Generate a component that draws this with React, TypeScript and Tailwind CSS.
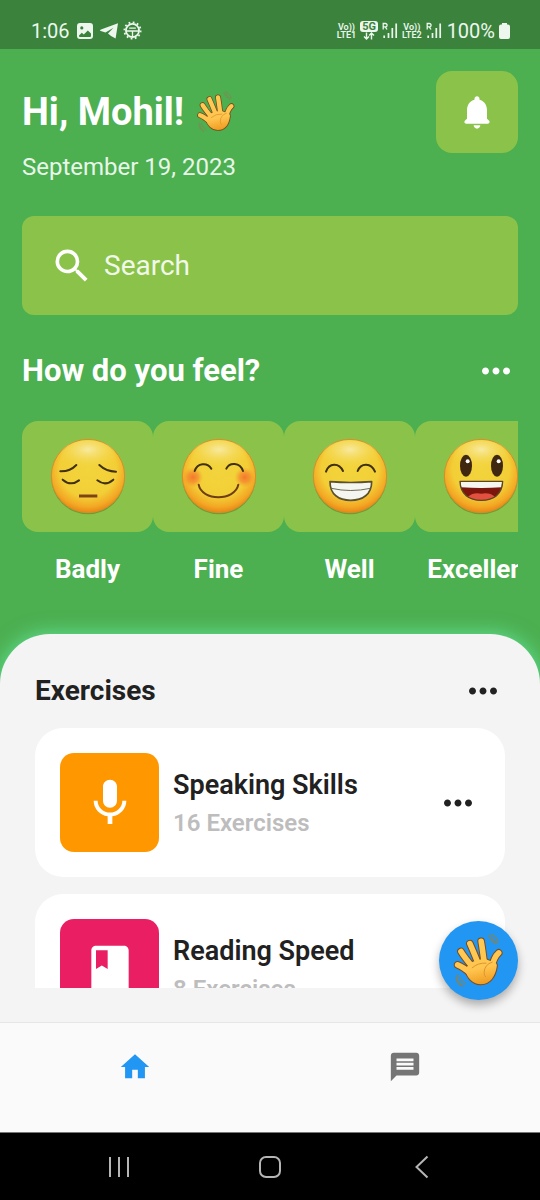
import type { ReactNode } from "react";
import { MdBook, MdHome, MdMessage, MdMic, MdMoreHoriz, MdSearch } from "react-icons/md";

function WavingHand({ className }: { className: string }) {
  const fingers = [
    "M80 162 Q97 168 118 188",
    "M90 122 Q101 140 126 170",
    "M117 98 Q126 118 142 158",
    "M151 91 Q155 114 160 154",
    "M204 126 Q190 138 182 172",
  ];
  const palm = "M112 176 C116 198 132 212 150 212 C172 212 186 194 190 164 L160 152 L130 160 Z";
  return (
    <svg viewBox="66 66 154 166" className={className} role="img" aria-label="Waving hand">
      <defs>
        <linearGradient id="hand" gradientUnits="userSpaceOnUse" x1="120" y1="80" x2="150" y2="225">
          <stop offset="0" stopColor="#ffcb55" />
          <stop offset="0.65" stopColor="#ffc54f" />
          <stop offset="1" stopColor="#ee981d" />
        </linearGradient>
      </defs>
      <g fill="none" stroke="#8a8354" strokeWidth="3.5" strokeLinecap="round" opacity="0.8">
        <path d="M174 72 Q178 90 196 98 M181 70 Q196 74 203 93 M182 77 Q186 88 199 95" />
        <path d="M77 192 Q77 212 97 227 M75 200 Q78 219 91 225 M84 195 Q90 209 103 220" />
      </g>
      <g stroke="#7b4a1c" fill="none" strokeLinecap="round" strokeWidth="23">
        {fingers.map((d) => <path key={d} d={d} />)}
        <path d={palm} fill="#7b4a1c" strokeLinejoin="round" />
      </g>
      <g stroke="url(#hand)" fill="none" strokeLinecap="round" strokeWidth="17">
        {fingers.map((d) => <path key={d} d={d} />)}
        <path d={palm} fill="url(#hand)" strokeLinejoin="round" />
      </g>
      <path d="M124 171 Q142 155 166 157 M184 154 Q160 162 160 186 Q160 194 164 198" fill="none" stroke="#dd9430" strokeWidth="3" strokeLinecap="round" />
    </svg>
  );
}

function Face({ name, children }: { name: string; children: ReactNode }) {
  return (
    <svg viewBox="0 0 240 240" className="size-20" role="img" aria-label={name}>
      <defs>
        <radialGradient id="skin" cx="0.5" cy="0.4" r="0.62">
          <stop offset="0" stopColor="#f2d43c" />
          <stop offset="0.62" stopColor="#f3cf37" />
          <stop offset="0.84" stopColor="#f3a824" />
          <stop offset="1" stopColor="#e87c12" />
        </radialGradient>
        <radialGradient id="shine" cx="0.5" cy="0.3" r="0.6">
          <stop offset="0" stopColor="#f8edae" stopOpacity="0.9" />
          <stop offset="1" stopColor="#f4d848" stopOpacity="0" />
        </radialGradient>
        <radialGradient id="cheek">
          <stop offset="0" stopColor="#f5672c" stopOpacity="0.85" />
          <stop offset="0.5" stopColor="#f5782c" stopOpacity="0.6" />
          <stop offset="1" stopColor="#f5982c" stopOpacity="0" />
        </radialGradient>
      </defs>
      <circle cx="120" cy="122" r="110" fill="#4e6b1d" opacity="0.45" />
      <circle cx="120" cy="117" r="110" fill="url(#skin)" stroke="#d3902a" strokeWidth="3" />
      <ellipse cx="120" cy="56" rx="84" ry="46" fill="url(#shine)" />
      {children}
    </svg>
  );
}

const line = { fill: "none", stroke: "#40300f", strokeWidth: 6, strokeLinecap: "round" as const };

const moods = [
  {
    name: "Badly",
    face: (
      <>
        <path {...line} d="M37 103 Q66 104 85 84 M154 84 Q174 103 204 104 M44 128 Q68 149 93 130 M148 130 Q172 149 196 128" />
        <path d="M93 177 H148" stroke="#7e4415" strokeWidth="9" />
      </>
    ),
  },
  {
    name: "Fine",
    face: (
      <>
        <circle cx="42" cy="121" r="31" fill="url(#cheek)" />
        <circle cx="197" cy="121" r="31" fill="url(#cheek)" />
        <path {...line} d="M47 102 C55 77 85 75 97 95 M142 95 C152 75 183 76 192 102" />
        <path {...line} stroke="#6f3d12" d="M59 143 C68 193 168 193 178 143" />
      </>
    ),
  },
  {
    name: "Well",
    face: (
      <>
        <path {...line} d="M48 104 C57 77 87 76 99 102 M143 102 C153 76 184 77 195 104" />
        <path d="M60 134 Q122 139 185 134 C185 172 158 190 122 190 C86 190 60 172 60 134Z" fill="#f5f6f0" stroke="#5b5030" strokeWidth="5" strokeLinejoin="round" />
        <path d="M64 154 Q122 167 181 154" fill="none" stroke="#6f6b58" strokeWidth="3" />
      </>
    ),
  },
  {
    name: "Excellent",
    face: (
      <>
        <ellipse cx="75" cy="86" rx="18" ry="33" fill="#40270f" />
        <ellipse cx="168" cy="86" rx="18" ry="33" fill="#40270f" />
        <circle cx="80" cy="73" r="6" fill="#fff" />
        <circle cx="173" cy="73" r="6" fill="#fff" />
        <path d="M57 133 H185 C184 172 158 190 121 190 C84 190 58 172 57 133Z" fill="#7c160d" />
        <path d="M81 179 Q97 165 121 170 Q145 165 162 179 Q145 190 121 190 Q98 190 81 179Z" fill="#e2503f" />
        <path d="M58 133 H184 L181 151 Q121 155 61 151Z" fill="#f5f6f0" />
        <path d="M57 133 H185 C184 172 158 190 121 190 C84 190 58 172 57 133Z" fill="none" stroke="#5b4526" strokeWidth="4" strokeLinejoin="round" />
      </>
    ),
  },
];

const exercises = [
  { title: "Speaking Skills", count: 16, Icon: MdMic, tile: "bg-[#ff9800]" },
  { title: "Reading Speed", count: 8, Icon: MdBook, tile: "bg-[#e91e63]" },
];

function Signal() {
  return (
    <svg viewBox="0 0 16 17" className="h-[17px] w-4" aria-hidden="true">
      <path d="M1.2 7.5V1.5H3.4a1.7 1.7 0 0 1 0 3.4H1.2M3.3 4.9L5 7.5" fill="none" stroke="#edf7ed" strokeWidth="1.3" />
      <path d="M2.200 13.500V16M6.500 11V16M10.300 6V16M14.200 1.500V16" stroke="#edf7ed" strokeWidth="1.7" />
    </svg>
  );
}

function VoLte({ sim }: { sim: number }) {
  return (
    <span className="flex flex-col items-center text-[9px] leading-[8px] font-semibold">
      <span>Vo))</span>
      <span>LTE{sim}</span>
    </span>
  );
}

function StatusBar() {
  return (
    <div className="flex h-[49px] shrink-0 items-center justify-between bg-[#3b833d] pt-3 pr-[30px] pl-[31px] text-[#edf7ed]">
      <div className="flex items-center gap-[7px]">
        <span className="text-xl leading-6">1:06</span>
        <svg viewBox="0 0 16 16" className="size-4" aria-hidden="true">
          <path fillRule="evenodd" fill="#edf7ed" d="M3 0H13A3 3 0 0 1 16 3V13A3 3 0 0 1 13 16H3A3 3 0 0 1 0 13V3A3 3 0 0 1 3 0ZM2 12.5V13.2Q2 14 3 14H13Q14 14 14 13V10.5L10.8 7.5L6.8 11.5L4.8 9.8ZM4.8 3.3A1.6 1.6 0 1 0 4.8 6.5A1.6 1.6 0 1 0 4.8 3.3Z" />
        </svg>
        <svg viewBox="0 0 18 16" className="h-4 w-[18px]" aria-hidden="true">
          <path d="M18 .3 15.6 15.6Q10.5 13 8 10.4L13.500 4.800 5.500 9.400 0 7.700Q0 7 1 6.600Z" fill="#edf7ed" />
        </svg>
        <svg viewBox="0 0 20 20" className="-ml-0.5 size-[19px]" aria-hidden="true">
          <circle cx="10" cy="10" r="8.6" fill="none" stroke="#edf7ed" strokeWidth="1.8" strokeDasharray="1.9 2.6" />
          <circle cx="10" cy="10" r="6.9" fill="none" stroke="#edf7ed" strokeWidth="1.9" />
          <path d="M3 10.500H17M10 10V17M6.500 7.500H13.500" fill="none" stroke="#edf7ed" strokeWidth="1.4" />
        </svg>
      </div>
      <div className="flex items-center gap-1">
        <VoLte sim={1} />
        <span className="flex flex-col items-center">
          <span className="rounded-[3px] bg-[#edf7ed] px-0.5 text-[11px] leading-[11px] font-bold text-[#3b833d]">5G</span>
          <svg viewBox="0 0 12 8" className="h-2 w-3" aria-hidden="true">
            <path d="M3.5 .5V7M1 4.5 3.5 7 6 4.5M8.5 7.5V1M6.2 3.5 8.5 1 11 3.5" fill="none" stroke="#edf7ed" strokeWidth="1.4" />
          </svg>
        </span>
        <Signal />
        <VoLte sim={2} />
        <Signal />
        <span className="ml-px text-xl leading-6">100%</span>
        <svg viewBox="0 0 11 16" className="h-4 w-[11px]" aria-hidden="true">
          <path d="M3 0H8V1.6H9Q11 1.6 11 3.6V14Q11 16 9 16H2Q0 16 0 14V3.6Q0 1.6 2 1.6H3Z" fill="#edf7ed" />
        </svg>
      </div>
    </div>
  );
}

function MoreButton({ label }: { label: string }) {
  return (
    <button type="button" aria-label={label} className="flex size-11 shrink-0 items-center justify-center">
      <MdMoreHoriz className="size-[42px]" />
    </button>
  );
}

export default function App() {
  return (
    <div className="flex h-screen flex-col bg-[#4caf50] font-[Roboto,sans-serif] text-white">
      <StatusBar />

      <header className="flex items-start justify-between px-[22px] pt-[22px]">
        <div className="pt-4">
          <h1 className="flex items-center gap-3 text-[38px] leading-[50px] font-bold">
            Hi, Mohil!
            <WavingHand className="h-[42px] w-10" />
          </h1>
          <p className="mt-4 text-2xl leading-7 text-[#e8f5e9]">September 19, 2023</p>
        </div>
        <button type="button" aria-label="Notifications" className="flex size-[82px] items-center justify-center rounded-2xl bg-[#8bc34a]">
          <svg viewBox="0 0 24 24" className="size-10" fill="currentColor" aria-hidden="true">
            <path d="M12 22c1.1 0 2-.9 2-2h-4c0 1.1.89 2 2 2zm6-6v-5c0-3.07-1.63-5.64-4.5-6.32V4c0-.83-.67-1.5-1.5-1.5s-1.5.67-1.5 1.5v.68C7.64 5.36 6 7.92 6 11v5l-1.29 1.29c-.63.63-.19 1.71.7 1.71h13.17c.89 0 1.34-1.08.71-1.71L18 16z" />
          </svg>
        </button>
      </header>

      <label className="mx-[22px] mt-[35px] flex h-[99px] shrink-0 items-center gap-[10px] rounded-xl bg-[#8bc34a] px-7">
        <MdSearch className="size-11 shrink-0" />
        <input type="search" aria-label="Search" placeholder="Search" className="w-full min-w-0 bg-transparent text-[28px] leading-9 outline-none placeholder:text-[#f1f8e9]" />
      </label>

      <section>
        <div className="flex items-center justify-between px-[22px] pt-[34px]">
          <h2 className="text-[31px] leading-10 font-bold">How do you feel?</h2>
          <MoreButton label="More moods" />
        </div>
        <div className="mx-[22px] mt-7 flex overflow-x-auto [scrollbar-width:none]">
          {moods.map(({ name, face }) => (
            <button type="button" key={name} className="flex w-[131px] shrink-0 flex-col items-center">
              <span className="flex h-[111px] w-full items-center justify-center rounded-2xl bg-[#8bc34a]">
                <Face name={name}>{face}</Face>
              </span>
              <span className="mt-[19px] text-[26px] leading-9 font-bold">{name}</span>
            </button>
          ))}
        </div>
      </section>

      <main className="mt-[47px] flex min-h-0 flex-1 flex-col rounded-t-[50px] bg-[#f4f4f4] px-[35px] pt-[35px] pb-[34px] text-[#212121] shadow-[0_0_20px_#69f0aecc]">
        <div className="flex items-center justify-between">
          <h2 className="text-[28px] leading-10 font-bold">Exercises</h2>
          <MoreButton label="More exercises" />
        </div>
        <ul className="mt-[15px] flex min-h-0 flex-1 flex-col gap-[17px] overflow-y-auto [scrollbar-width:none]">
          {exercises.map(({ title, count, Icon, tile }) => (
            <li key={title} className="flex shrink-0 items-center rounded-[28px] bg-white p-[25px]">
              <span className={`flex size-[99px] shrink-0 items-center justify-center rounded-[14px] text-white ${tile}`}>
                <Icon className="size-14" />
              </span>
              <div className="ml-[14px] flex-1 pt-0.5">
                <h3 className="text-[27px] leading-9 font-semibold">{title}</h3>
                <p className="mt-0.5 text-2xl leading-9 font-semibold text-[#bdbdbd]">{count} Exercises</p>
              </div>
              <MoreButton label={`More about ${title}`} />
            </li>
          ))}
        </ul>
      </main>

      <div className="relative shrink-0">
        <button type="button" aria-label="Say hello" className="absolute right-[22px] bottom-full mb-[22px] flex size-[79px] items-center justify-center rounded-full bg-[#2196f3] shadow-[0_5px_10px_rgba(0,0,0,0.3)]">
          <WavingHand className="h-[55px] w-[51px]" />
        </button>
        <nav className="grid h-[110px] grid-cols-2 items-start justify-items-center border-t border-[#e6e6e6] bg-[#fafafa] pt-[27px]">
          <a href="#home" aria-label="Home" aria-current="page" className="text-[#2196f3]">
            <MdHome className="size-[34px]" />
          </a>
          <a href="#messages" aria-label="Messages" className="text-[#757575]">
            <MdMessage className="size-[34px]" />
          </a>
        </nav>
      </div>

      <div className="grid h-[68px] shrink-0 grid-cols-3 items-center justify-items-center border-t border-[#777] bg-black px-11">
        <button type="button" aria-label="Recent apps">
          <svg viewBox="0 0 24 24" className="size-6"><path d="M3 2V22M12 2V22M21 2V22" stroke="#b5b5b5" strokeWidth="2" /></svg>
        </button>
        <button type="button" aria-label="Home screen">
          <svg viewBox="0 0 24 24" className="size-6"><rect x="2" y="2" width="20" height="20" rx="6" fill="none" stroke="#b5b5b5" strokeWidth="2" /></svg>
        </button>
        <button type="button" aria-label="Back">
          <svg viewBox="0 0 24 24" className="size-6"><path d="M18.500 1.500 7.500 12 18.500 22.500" fill="none" stroke="#b5b5b5" strokeWidth="2" /></svg>
        </button>
      </div>
    </div>
  );
}
